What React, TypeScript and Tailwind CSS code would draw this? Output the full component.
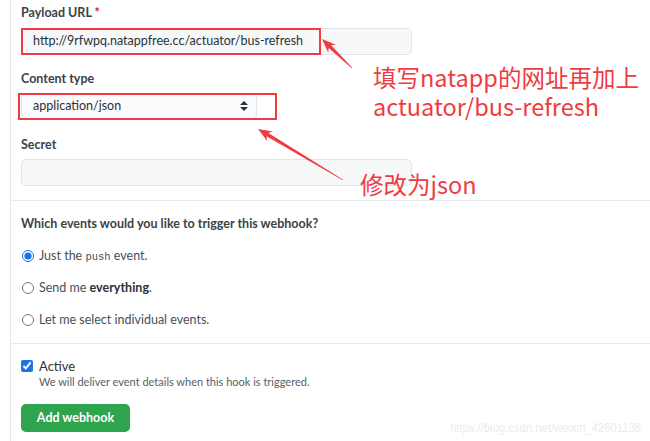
import React from "react";

type P = { x: number; y: number };

function Arrow({ tip, tail }: { tip: P; tail: P }) {
  const dx = tail.x - tip.x;
  const dy = tail.y - tip.y;
  const len = Math.hypot(dx, dy);
  const ux = dx / len;
  const uy = dy / len;
  const nx = -uy;
  const ny = ux;
  const headLen = 14;
  const headHalf = 5.5;
  const shaftHalf = 1.8;
  const tailHalf = 0.4;
  const bx = tip.x + ux * headLen;
  const by = tip.y + uy * headLen;
  const sx = tip.x + ux * (headLen - 3);
  const sy = tip.y + uy * (headLen - 3);
  const pts: [number, number][] = [
    [tip.x, tip.y],
    [bx + nx * headHalf, by + ny * headHalf],
    [sx + nx * shaftHalf, sy + ny * shaftHalf],
    [tail.x + nx * tailHalf, tail.y + ny * tailHalf],
    [tail.x - nx * tailHalf, tail.y - ny * tailHalf],
    [sx - nx * shaftHalf, sy - ny * shaftHalf],
    [bx - nx * headHalf, by - ny * headHalf],
  ];
  return <polygon points={pts.map((p) => p.join(",")).join(" ")} fill="#ef3b41" />;
}

export default function App() {
  const font = "font-['Lato','Noto_Sans_CJK_SC',sans-serif]";
  return (
    <div className={`relative w-[650px] h-[441px] overflow-hidden bg-white ${font}`}>
      <div className="ml-[10px] h-full border-l border-[#e6e8eb]">
        {/* Form fields */}
        <div className="pl-[10px] pt-[3px] pb-[14px] border-b border-[#e6e8eb]">
          <div className="h-[20px] leading-[20px] text-[12.5px] font-bold text-[#3d4247]">
            Payload URL <span className="text-[#cb2431]">*</span>
          </div>
          <div className="relative mt-[5px] w-[391px] h-[27px] rounded-[5px] border border-[#e1e4e8] bg-[#f6f8fa] flex items-center pl-[11px] text-[12.5px] text-[#2c3136]">
            http://9rfwpq.natappfree.cc/actuator/bus-refresh
            <div className="absolute left-[-1px] top-[-1px] w-[300px] h-[27px] border-2 border-[#ef3b41]" />
          </div>

          <div className="mt-[14px] h-[20px] leading-[20px] text-[12.5px] font-bold text-[#3d4247]">
            Content type
          </div>
          <div className="relative mt-[4px] w-[236px] h-[26px] rounded-[4px] border border-[#e1e4e8] bg-[#fafbfc] flex items-center justify-between pl-[11px] pr-[8px] text-[12.5px] text-[#2c3136]">
            <span>application/json</span>
            <svg width="8" height="10" viewBox="0 0 8 10">
              <path d="M4 0 L8 4 L0 4 Z" fill="#2c3136" />
              <path d="M4 10 L8 6 L0 6 Z" fill="#2c3136" />
            </svg>
            <div className="absolute left-[-4px] top-[-1px] w-[259px] h-[27px] border-2 border-[#ef3b41]" />
          </div>

          <div className="mt-[16px] h-[20px] leading-[20px] text-[12.5px] font-bold text-[#3d4247]">
            Secret
          </div>
          <div className="mt-[4px] w-[391px] h-[27px] rounded-[5px] border border-[#e1e4e8] bg-[#f6f8fa]" />
        </div>

        {/* Events */}
        <div className="pl-[10px] pt-[13px] pb-[13px] border-b border-[#e6e8eb]">
          <div className="h-[20px] leading-[20px] text-[12.5px] font-bold text-[#3d4247]">
            Which events would you like to trigger this webhook?
          </div>
          <div className="mt-[12px] flex flex-col gap-[12px] text-[12.5px] text-[#4a5056]">
            <label className="h-[20px] flex items-center gap-[5px]">
              <input type="radio" name="ev" defaultChecked className="m-0 ml-[1px] w-[12px] h-[12px] accent-[#1a73e8]" />
              <span>
                Just the <span className="font-['Liberation_Mono',monospace] text-[10.5px]">push</span> event.
              </span>
            </label>
            <label className="h-[20px] flex items-center gap-[5px]">
              <input type="radio" name="ev" className="m-0 ml-[1px] w-[12px] h-[12px]" />
              <span>
                Send me <b className="font-bold text-[#2c3136]">everything</b>.
              </span>
            </label>
            <label className="h-[20px] flex items-center gap-[5px]">
              <input type="radio" name="ev" className="m-0 ml-[1px] w-[12px] h-[12px]" />
              <span>Let me select individual events.</span>
            </label>
          </div>
        </div>

        {/* Active + button */}
        <div className="pl-[10px] pt-[13px]">
          <div className="flex gap-[6px]">
            <input type="checkbox" defaultChecked className="m-0 mt-[3px] w-[12px] h-[12px] accent-[#1a73e8]" />
            <div>
              <div className="h-[18px] leading-[18px] text-[13px] text-[#2c3136]">Active</div>
              <div className="h-[14px] leading-[14px] text-[11px] text-[#5a6066]">
                We will deliver event details when this hook is triggered.
              </div>
            </div>
          </div>
          <button className="mt-[15px] w-[109px] h-[28px] rounded-[5px] bg-[#2ea44f] text-white text-[12.5px] font-bold">
            Add webhook
          </button>
        </div>
      </div>

      {/* Annotations */}
      <svg className="absolute left-0 top-0" width="650" height="441">
        <Arrow tip={{ x: 322, y: 39 }} tail={{ x: 352, y: 68 }} />
        <Arrow tip={{ x: 258, y: 129 }} tail={{ x: 343, y: 180 }} />
      </svg>
      <div className="absolute left-[373px] top-[63px] text-[23.5px] leading-[29px] text-[#ef3b41] font-['Noto_Sans_CJK_SC',sans-serif] whitespace-nowrap">
        <div>填写natapp的网址再加上</div>
        <div>actuator/bus-refresh</div>
      </div>
      <div className="absolute left-[360px] top-[170px] text-[23.5px] leading-[29px] text-[#ef3b41] font-['Noto_Sans_CJK_SC',sans-serif] whitespace-nowrap">
        修改为json
      </div>
      <div className="absolute left-[450px] top-[419px] origin-left scale-x-[0.94] text-[12px] leading-[18px] text-[#ececec] font-['Liberation_Sans',sans-serif] whitespace-nowrap">
        https://blog.csdn.net/weixin_42601136
      </div>
    </div>
  );
}
